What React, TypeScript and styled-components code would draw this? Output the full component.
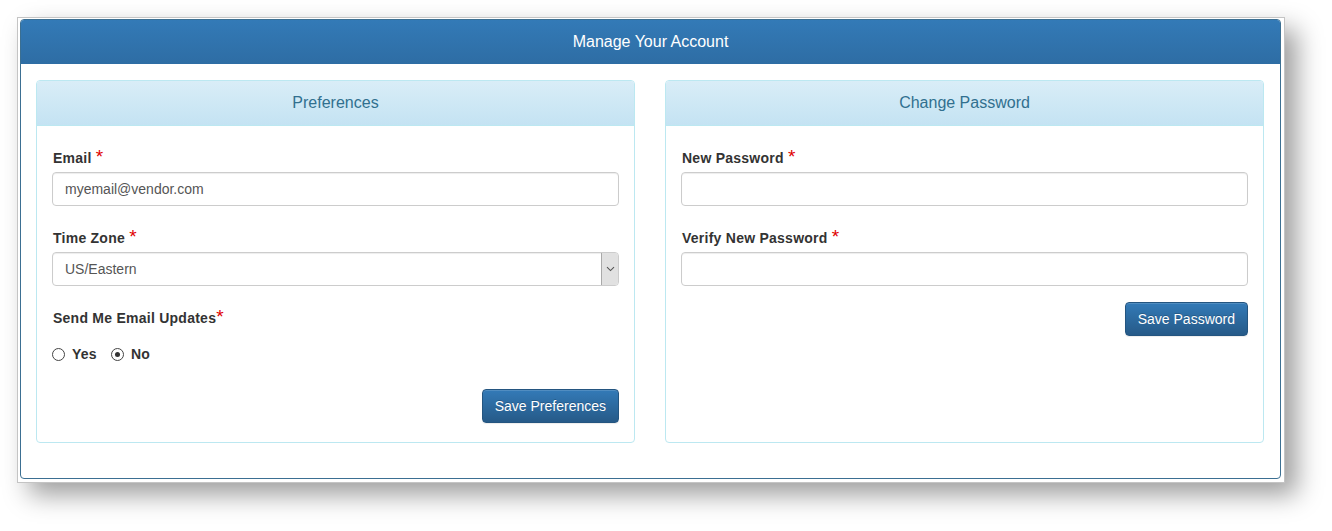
import React from "react";
import styled, { createGlobalStyle } from "styled-components";

const GlobalStyle = createGlobalStyle`
  html, body { margin: 0; padding: 0; background: #ffffff; }
  body { font-family: "Liberation Sans", Arial, Helvetica, sans-serif; color: #333; }
  * { box-sizing: border-box; }
`;

const Page = styled.div`
  padding: 17px 0 0 17px;
  width: 1332px;
  height: 531px;
  overflow: hidden;
`;

const Frame = styled.div`
  width: 1268px;
  background: #fff;
  border: 1px solid #c4c4c4;
  padding: 1px 3px 3px 2px;
  box-shadow: 12px 12px 24px rgba(0, 0, 0, 0.38);
`;

const Panel = styled.div`
  border: 1px solid #3b6f92;
  border-radius: 4px;
  overflow: hidden;
  background: #fff;
`;

const PanelHeader = styled.div`
  height: 44px;
  line-height: 43px;
  text-align: center;
  color: #fff;
  font-size: 16px;
  background: linear-gradient(to bottom, #337ab7 0%, #2e6da4 100%);
`;

const PanelBody = styled.div`
  padding: 16px 16px 35px 15px;
  display: grid;
  grid-template-columns: 1fr 1fr;
  column-gap: 30px;
`;

const InnerPanel = styled.div`
  border: 1px solid #bce8f1;
  border-radius: 4px;
  display: flex;
  flex-direction: column;
  overflow: hidden;
`;

const InnerHeading = styled.div`
  height: 45px;
  line-height: 44px;
  border-bottom: 1px solid #bce8f1;
  text-align: center;
  font-size: 16px;
  color: #31708f;
  background: linear-gradient(to bottom, #d9edf7 0%, #c4e3f3 100%);
`;

const InnerBody = styled.div`
  padding: 15px 15px 19px 15px;
  flex: 1;
`;

const FormGroup = styled.div`
  margin-bottom: 15px;
`;

const Label = styled.label`
  display: block;
  height: 26px;
  padding-top: 6px;
  line-height: 20px;
  font-size: 14px;
  font-weight: bold;
  letter-spacing: 0.25px;
  color: #333;
  margin-bottom: 5px;
  padding-left: 1px;
`;

const Star = styled.span`
  color: #e00000;
  font-size: 19px;
  font-weight: normal;
  letter-spacing: 0;
`;

const TextInput = styled.input`
  display: block;
  width: 100%;
  height: 34px;
  padding: 6px 12px;
  font-family: inherit;
  font-size: 14px;
  color: #555;
  background: #fff;
  border: 1px solid #ccc;
  border-radius: 4px;
  box-shadow: inset 0 1px 1px rgba(0, 0, 0, 0.075);
  outline: none;
`;

const SelectBox = styled.div`
  display: flex;
  align-items: stretch;
  height: 34px;
  border: 1px solid #ccc;
  border-radius: 4px;
  box-shadow: inset 0 1px 1px rgba(0, 0, 0, 0.075);
  background: #fff;
  overflow: hidden;
`;

const SelectText = styled.span`
  flex: 1;
  padding: 0 12px;
  line-height: 32px;
  font-size: 14px;
  color: #555;
`;

const ArrowBox = styled.span`
  width: 17px;
  display: flex;
  align-items: center;
  justify-content: center;
  background: #e1e1e1;
  border-left: 1px solid #a9a9a9;
  color: #555;
`;

const RadioRow = styled.div`
  display: flex;
  align-items: center;
  height: 20px;
  margin-top: 17px;
`;

const RadioOption = styled.label`
  display: flex;
  align-items: center;
  font-size: 14px;
  font-weight: bold;
  letter-spacing: 0.25px;
  color: #333;
  margin-right: 14px;
`;

const RadioCircle = styled.span<{ $checked?: boolean }>`
  width: 13px;
  height: 13px;
  border-radius: 50%;
  border: 1px solid #444;
  background: #fff;
  margin-right: 7px;
  display: flex;
  align-items: center;
  justify-content: center;
  &::after {
    content: "";
    width: 5px;
    height: 5px;
    border-radius: 50%;
    background: ${(p) => (p.$checked ? "#333" : "transparent")};
  }
`;

const ButtonRow = styled.div<{ $top?: number }>`
  display: flex;
  justify-content: flex-end;
  padding-top: ${(p) => p.$top ?? 0}px;
`;

const PrimaryButton = styled.button`
  height: 34px;
  padding: 0 12px;
  font-family: inherit;
  font-size: 14px;
  color: #fff;
  border: 1px solid #245580;
  border-radius: 4px;
  background: linear-gradient(to bottom, #337ab7 0%, #265a88 100%);
  text-shadow: 0 -1px 0 rgba(0, 0, 0, 0.2);
  box-shadow: inset 0 1px 0 rgba(255, 255, 255, 0.15), 0 1px 1px rgba(0, 0, 0, 0.075);
  cursor: pointer;
`;

const Chevron = () => (
  <svg width="9" height="6" viewBox="0 0 9 6" fill="none">
    <path d="M1 1.2 L4.5 4.6 L8 1.2" stroke="#555" strokeWidth="1.1" />
  </svg>
);

const Req: React.FC<{ gap?: boolean }> = ({ gap = true }) => (
  <>
    {gap ? " " : ""}
    <Star>*</Star>
  </>
);

export default function App() {
  return (
    <>
      <GlobalStyle />
      <Page>
        <Frame>
          <Panel>
            <PanelHeader>Manage Your Account</PanelHeader>
            <PanelBody>
              <InnerPanel>
                <InnerHeading>Preferences</InnerHeading>
                <InnerBody>
                  <FormGroup>
                    <Label>
                      Email<Req />
                    </Label>
                    <TextInput defaultValue="myemail@vendor.com" />
                  </FormGroup>
                  <FormGroup>
                    <Label>
                      Time Zone<Req />
                    </Label>
                    <SelectBox>
                      <SelectText>US/Eastern</SelectText>
                      <ArrowBox>
                        <Chevron />
                      </ArrowBox>
                    </SelectBox>
                  </FormGroup>
                  <FormGroup>
                    <Label>
                      Send Me Email Updates<Req gap={false} />
                    </Label>
                    <RadioRow>
                      <RadioOption>
                        <RadioCircle />
                        Yes
                      </RadioOption>
                      <RadioOption>
                        <RadioCircle $checked />
                        No
                      </RadioOption>
                    </RadioRow>
                  </FormGroup>
                  <ButtonRow $top={10}>
                    <PrimaryButton>Save Preferences</PrimaryButton>
                  </ButtonRow>
                </InnerBody>
              </InnerPanel>
              <InnerPanel>
                <InnerHeading>Change Password</InnerHeading>
                <InnerBody>
                  <FormGroup>
                    <Label>
                      New Password<Req />
                    </Label>
                    <TextInput type="password" />
                  </FormGroup>
                  <FormGroup>
                    <Label>
                      Verify New Password<Req />
                    </Label>
                    <TextInput type="password" />
                  </FormGroup>
                  <ButtonRow $top={1}>
                    <PrimaryButton>Save Password</PrimaryButton>
                  </ButtonRow>
                </InnerBody>
              </InnerPanel>
            </PanelBody>
          </Panel>
        </Frame>
      </Page>
    </>
  );
}
